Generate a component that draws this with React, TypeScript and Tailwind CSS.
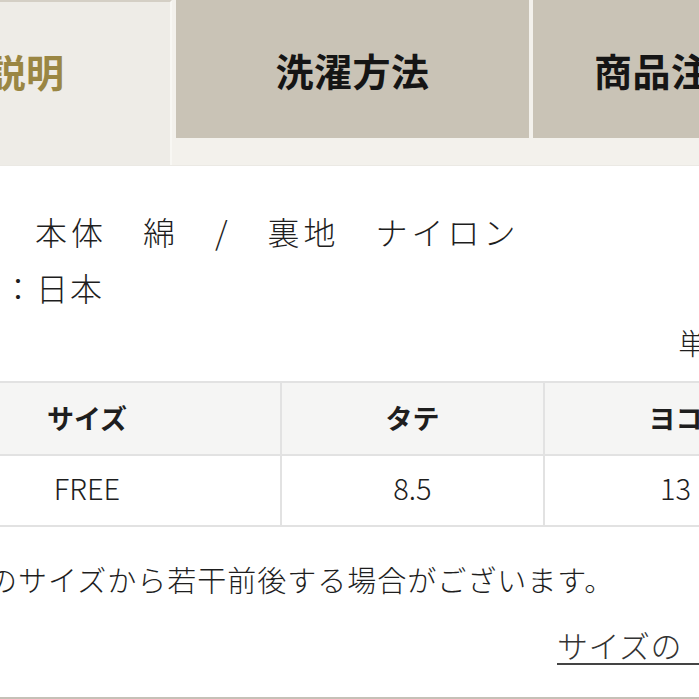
import React from "react";

const font = { fontFamily: '"Noto Sans CJK JP", "Noto Sans", sans-serif' };

export default function App() {
  return (
    <div className="w-[699px] h-[699px] overflow-hidden bg-white text-[#1e1e1e]" style={font}>
      <div className="ml-[-195px] w-[1200px]">
        {/* Tabs */}
        <div className="flex items-start gap-[4px] h-[165px] bg-[#f3f1ec]">
          <div className="w-[367px] h-[165px] bg-[#eeece7] border-t-2 border-[#d4cfc5] border-r-2 border-r-[#f8f7f3]">
            <div className="h-[136px] flex items-center justify-center text-[38px] font-bold tracking-[0.5px] text-[#9a8643]">
              商品説明
            </div>
          </div>
          <div className="w-[353px] h-[138px] bg-[#c9c3b6] flex items-center justify-center text-[38px] font-bold tracking-[0.5px] text-[#151515]">
            洗濯方法
          </div>
          <div className="w-[353px] h-[138px] bg-[#c9c3b6] flex items-center justify-center text-[38px] font-bold tracking-[0.5px] text-[#151515]">
            商品注意事項
          </div>
        </div>

        {/* Content */}
        <div className="h-[532px] bg-white border-t border-[#ebe9e4] pl-[87px] pt-[37px] font-light">
          <div className="w-[914px]">
            <div className="ml-[-1px] text-[32px] leading-[56px] tracking-[4px] whitespace-pre">
              素材：　本体　綿　/　裏地　ナイロン
            </div>
            <div className="pl-[8px] text-[32px] leading-[56px] tracking-[2px] whitespace-pre">
              原産国：日本
            </div>
            <div className="mt-[7px] text-right text-[29px] leading-[40px]">単位：cm</div>

            <table className="mt-[19px] w-[914px] border-collapse table-fixed">
              <colgroup>
                <col className="w-[388px]" />
                <col className="w-[263px]" />
                <col className="w-[263px]" />
              </colgroup>
              <thead>
                <tr className="bg-[#f5f5f4] h-[73px]">
                  <th className="border-2 border-[#e2e2e2] text-[27px] font-bold text-center align-middle">サイズ</th>
                  <th className="border-2 border-[#e2e2e2] text-[27px] font-bold text-center align-middle">タテ</th>
                  <th className="border-2 border-[#e2e2e2] text-[27px] font-bold text-center align-middle">ヨコ</th>
                </tr>
              </thead>
              <tbody>
                <tr className="bg-white h-[71px]">
                  <td className="border-2 border-[#e2e2e2] text-[29px] text-center align-middle pb-[5px]">FREE</td>
                  <td className="border-2 border-[#e2e2e2] text-[29px] text-center align-middle pb-[5px]">8.5</td>
                  <td className="border-2 border-[#e2e2e2] text-[29px] text-center align-middle pb-[5px]">13</td>
                </tr>
              </tbody>
            </table>

            <div className="mt-[32px] pl-[6px] text-[29px] leading-[40px] tracking-[1px] whitespace-nowrap">
              ※表記のサイズから若干前後する場合がございます。
            </div>
            <div className="mt-[26px] pl-[665px]">
              <span className="text-[31px] leading-[40px] tracking-[0.5px] text-[#333] underline decoration-2 underline-offset-[5px] decoration-[#444] whitespace-pre">
                サイズの　測り方へ
              </span>
            </div>
          </div>
        </div>
        <div className="h-[2px] bg-[#c5c1b7]" />
      </div>
    </div>
  );
}
